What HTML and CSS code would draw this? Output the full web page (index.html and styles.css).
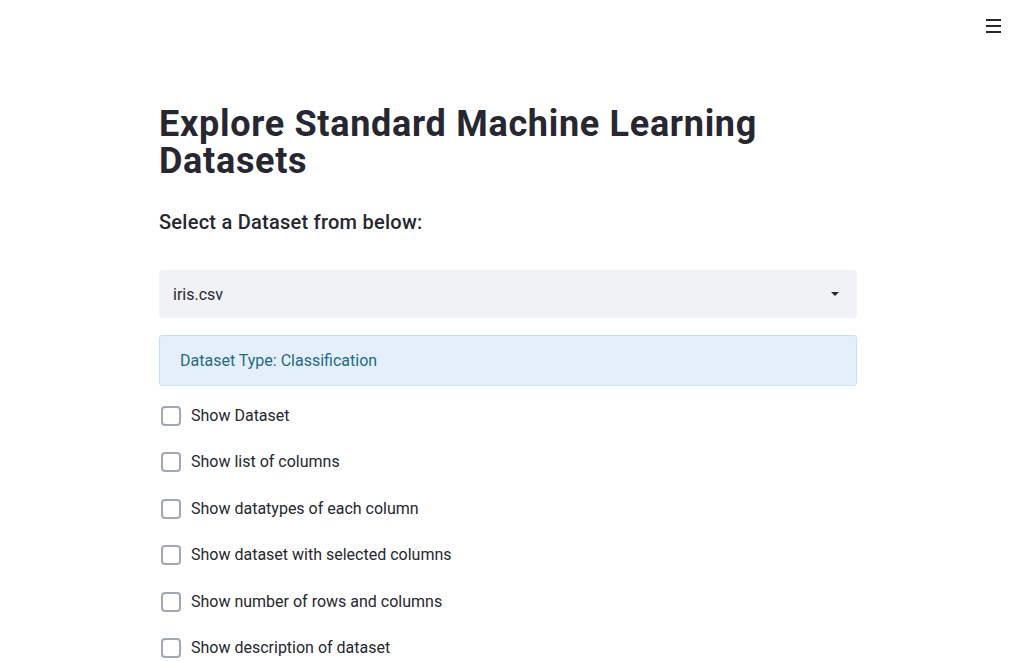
FILE: index.html
```html
<!DOCTYPE html>
<html lang="en">
<head>
<meta charset="utf-8">
<title>Explore Standard Machine Learning Datasets</title>
<link rel="stylesheet" href="styles.css">
</head>
<body>
<header class="topbar">
  <button class="menu-btn" aria-label="Menu">
    <span class="bar"></span><span class="bar"></span><span class="bar"></span>
  </button>
</header>
<main class="main">
  <h1 class="title">Explore Standard Machine Learning Datasets</h1>
  <h3 class="subheader">Select a Dataset from below:</h3>
  <div class="select">
    <span class="select-value">iris.csv</span>
    <svg class="caret" width="8" height="4" viewBox="0 0 8 4"><path d="M0 0H8L4 4Z" fill="#262730"/></svg>
  </div>
  <div class="info">Dataset Type: Classification</div>
  <ul class="checks">
    <li class="check"><span class="box"></span><span class="label">Show Dataset</span></li>
    <li class="check"><span class="box"></span><span class="label">Show list of columns</span></li>
    <li class="check"><span class="box"></span><span class="label">Show datatypes of each column</span></li>
    <li class="check"><span class="box"></span><span class="label">Show dataset with selected columns</span></li>
    <li class="check"><span class="box"></span><span class="label">Show number of rows and columns</span></li>
    <li class="check"><span class="box"></span><span class="label">Show description of dataset</span></li>
  </ul>
</main>
</body>
</html>
```
FILE: styles.css
```css
* { box-sizing: border-box; }
html, body { margin: 0; padding: 0; background: #ffffff; }
body {
  font-family: Roboto, "Liberation Sans", sans-serif;
  color: #262730;
  font-size: 16px;
  overflow: hidden;
}
.topbar {
  display: flex;
  justify-content: flex-end;
  height: 52px;
  padding: 19px 15px 0 0;
}
.menu-btn {
  display: flex;
  flex-direction: column;
  gap: 4px;
  width: 15px;
  padding: 0;
  border: 0;
  background: none;
  height: 14px;
}
.menu-btn .bar {
  display: block;
  width: 15px;
  height: 2px;
  background: #262730;
}
.main {
  width: 698px;
  margin: 0 auto;
  padding-top: 54px;
}
.title {
  margin: 0;
  font-size: 36px;
  line-height: 37px;
  font-weight: 700;
  letter-spacing: 0.7px;
}
.subheader {
  margin: 27px 0 0;
  font-size: 20px;
  line-height: 30px;
  font-weight: 500;
  letter-spacing: 0.25px;
}
.select {
  margin-top: 33px;
  height: 48px;
  background: #f0f2f6;
  border-radius: 4px;
  display: flex;
  align-items: center;
  justify-content: space-between;
  padding: 0 18px 0 14px;
}
.select-value { font-size: 16px; }
.caret { display: block; }
.info {
  margin-top: 17px;
  height: 51px;
  background: #e5eff9;
  border: 1px solid #c8dff4;
  border-radius: 3px;
  display: flex;
  align-items: center;
  padding: 0 20px;
  color: #1f6b82;
  font-size: 16px;
}
.checks {
  list-style: none;
  margin: 18px 0 0;
  padding: 0;
  display: flex;
  flex-direction: column;
  gap: 22.4px;
}
.check {
  display: flex;
  align-items: center;
  height: 24px;
  padding-left: 2px;
}
.box {
  width: 20px;
  height: 20px;
  border: 2px solid #a3a8b8;
  border-radius: 4px;
  margin-right: 10px;
  flex: none;
}
.label { font-size: 16px; line-height: 24px; }
```
